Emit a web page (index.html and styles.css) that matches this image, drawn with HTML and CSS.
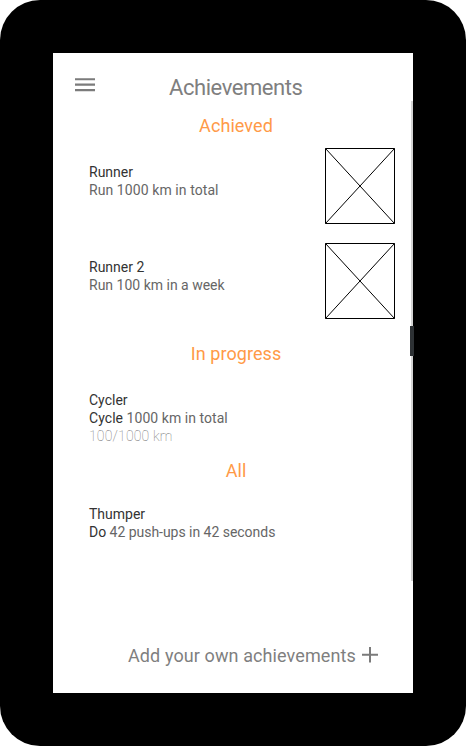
FILE: index.html
```html
<!DOCTYPE html>
<html lang="en">
<head>
<meta charset="utf-8">
<title>Achievements</title>
<link rel="stylesheet" href="styles.css">
</head>
<body>
<div class="device">
  <main class="screen">
    <header class="bar">
      <svg class="menu" width="20" height="14" viewBox="0 0 20 14"><path d="M0 1.2h20M0 6.6h20M0 12.1h20" stroke="#7b7b7b" stroke-width="2.1"/></svg>
      <h1>Achievements</h1>
    </header>
    <div class="body">
      <h2>Achieved</h2>
      <section class="item first">
        <div><h3>Runner</h3><p class="wide">Run 1000 km in total</p></div>
        <svg class="thumb" width="70" height="76" viewBox="0 0 70 76"><path d="M.5.5h69v75H.5zL69.5 75.5M69.5.5L.5 75.5" fill="#fff" stroke="#000"/></svg>
      </section>
      <section class="item second">
        <div><h3>Runner 2</h3><p>Run 100 km in a week</p></div>
        <svg class="thumb" width="70" height="76" viewBox="0 0 70 76"><path d="M.5.5h69v75H.5zL69.5 75.5M69.5.5L.5 75.5" fill="#fff" stroke="#000"/></svg>
      </section>
      <h2 class="progress">In progress</h2>
      <section class="plain"><h3>Cycler</h3><p class="cycle"><b>Cycle</b> 1000 km in total</p><p class="count">100/1000 km</p></section>
      <h2 class="all">All</h2>
      <section class="plain thumper"><h3>Thumper</h3><p class="tight"><b>Do</b> 42 push-ups in 42 seconds</p></section>
    </div>
    <footer class="add"><span>Add your own achievements</span><svg width="16" height="16" viewBox="0 0 16 16"><path d="M8 0v15.5M0 7.8h16" stroke="#7b7b7b" stroke-width="2"/></svg></footer>
    <div class="track"><div class="handle"></div></div>
  </main>
</div>
</body>
</html>
```
FILE: styles.css
```css
* { box-sizing: border-box; margin: 0; padding: 0; }
body { background: #fff; font-family: Roboto, sans-serif; }
svg { display: block; }
.device { width: 466px; height: 746px; padding: 53px; background: #000; border-radius: 40px; }
.screen { position: relative; width: 360px; height: 640px; background: #fff; }
.bar { display: flex; height: 61px; padding: 21px 0 0 22px; }
.menu { margin-top: 4px; }
h1 { margin-left: 74px; font-size: 22px; line-height: 28px; font-weight: 400; color: #7f7f7f; white-space: nowrap; letter-spacing: -0.44px; }
h2 { font-size: 18px; line-height: 24px; font-weight: 400; color: #ff9a47; text-align: center; padding-left: 6px; letter-spacing: 0.08px; }
.item { display: flex; justify-content: space-between; height: 76px; padding: 0 18px 0 36px; }
.item > div { padding-top: 15px; }
.first { margin-top: 10px; }
.second { margin-top: 19px; }
h3, p { font-size: 14px; line-height: 18px; font-weight: 400; white-space: nowrap; }
h3, b { color: #333; font-weight: 400; }
p { color: #666; }
.wide { letter-spacing: 0.08px; }
.cycle { letter-spacing: 0.05px; }
.tight { letter-spacing: -0.03px; }
.progress { margin-top: 23px; }
.plain { padding-left: 36px; margin-top: 25px; }
.count { font-weight: 100; color: #666; letter-spacing: 0.18px; }
.all { margin-top: 14px; }
.thumper { margin-top: 22px; }
.add { position: absolute; left: 75px; top: 591px; display: flex; align-items: center; gap: 6px; font-size: 18px; line-height: 24px; letter-spacing: 0.1px; color: #7f7f7f; white-space: nowrap; }
.add svg { margin-top: -3px; }
.track { position: absolute; right: 0; top: 48px; width: 2px; height: 480px; background: #d3d3d3; }
.handle { position: absolute; right: -1px; top: 225px; width: 4px; height: 30px; background: #2d3134; }
```
